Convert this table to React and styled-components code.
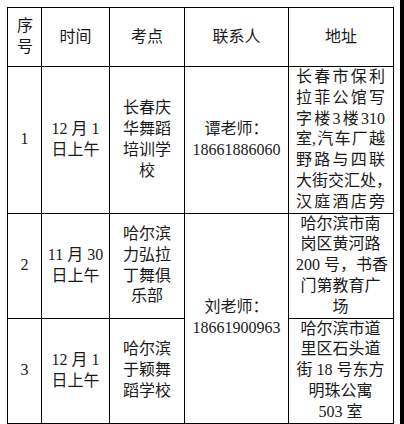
import React from "react";
import styled, { createGlobalStyle } from "styled-components";

const GlobalStyle = createGlobalStyle`
  html, body {
    margin: 0;
    padding: 0;
    background: #fff;
  }
  body {
    font-family: "Liberation Serif", "Noto Sans CJK SC", serif;
    color: #1a1a1a;
  }
`;

const Page = styled.div`
  display: flex;
  width: 404px;
  height: 424px;
  background: #fff;
  overflow: hidden;
`;

const Sheet = styled.div`
  width: 400px;
  padding: 7px 0 0 7px;
  box-sizing: border-box;
`;

const EdgeStrip = styled.div`
  width: 4px;
  height: 100%;
  background: #000;
`;

const Table = styled.table`
  width: 386px;
  table-layout: fixed;
  border-collapse: collapse;
  font-size: 16px;
  line-height: 20.8px;
`;

const Col = styled.col`
  width: ${(p) => p.$w}px;
`;

const Row = styled.tr`
  height: ${(p) => p.$h}px;
`;

const HeadCell = styled.th`
  border: 1px solid #000;
  font-weight: normal;
  text-align: center;
  vertical-align: middle;
  padding: 0 ${(p) => p.$pad || 7}px;
`;

const Cell = styled.td`
  border: 1px solid #000;
  text-align: center;
  vertical-align: middle;
  padding: 0 ${(p) => p.$pad || 7}px;
  white-space: nowrap;
`;

const AddrCell = styled.td`
  border: 1px solid #000;
  vertical-align: middle;
  padding: 0 8px 0 7px;
  white-space: nowrap;
`;

const Line = styled.div`
  text-align: center;
`;

const SpreadLine = styled.div`
  display: flex;
  justify-content: space-between;
`;

const tokenize = (s) => s.match(/[0-9]+|[^0-9\s][，,]?/g) || [];

const Lines = ({ lines }) =>
  lines.map((l, i) => <Line key={i}>{l}</Line>);

const Address = ({ lines, spread }) =>
  lines.map((l, i) =>
    spread ? (
      <SpreadLine key={i}>
        {tokenize(l).map((t, j) => (
          <span key={j}>{t}</span>
        ))}
      </SpreadLine>
    ) : (
      <Line key={i}>{l}</Line>
    )
  );

const rows = [
  {
    no: "1",
    height: 146,
    time: ["12 月 1", "日上午"],
    place: ["长春庆", "华舞蹈", "培训学", "校"],
    contact: ["谭老师：", "18661886060"],
    spread: true,
    address: [
      "长春市保利",
      "拉菲公馆写",
      "字楼 3 楼 310",
      "室,汽车厂越",
      "野路与四联",
      "大街交汇处，",
      "汉庭酒店旁",
    ],
  },
  {
    no: "2",
    height: 104,
    time: ["11 月 30", "日上午"],
    place: ["哈尔滨", "力弘拉", "丁舞俱", "乐部"],
    contact: ["刘老师：", "18661900963"],
    contactSpan: 2,
    address: ["哈尔滨市南", "岗区黄河路", "200 号，书香", "门第教育广", "场"],
  },
  {
    no: "3",
    height: 105,
    time: ["12 月 1", "日上午"],
    place: ["哈尔滨", "于颖舞", "蹈学校"],
    address: ["哈尔滨市道", "里区石头道", "街 18 号东方", "明珠公寓", "503 室"],
  },
];

export default function App() {
  return (
    <>
      <GlobalStyle />
      <Page>
        <Sheet>
          <Table>
            <colgroup>
              <Col $w={34} />
              <Col $w={68} />
              <Col $w={75} />
              <Col $w={104} />
              <Col $w={105} />
            </colgroup>
            <thead>
              <Row $h={59}>
                <HeadCell $pad={9}>序号</HeadCell>
                <HeadCell>时间</HeadCell>
                <HeadCell>考点</HeadCell>
                <HeadCell>联系人</HeadCell>
                <HeadCell>地址</HeadCell>
              </Row>
            </thead>
            <tbody>
              {rows.map((r) => (
                <Row key={r.no} $h={r.height}>
                  <Cell $pad={2}>{r.no}</Cell>
                  <Cell $pad={2}>
                    <Lines lines={r.time} />
                  </Cell>
                  <Cell $pad={2}>
                    <Lines lines={r.place} />
                  </Cell>
                  {r.contact && (
                    <Cell $pad={2} rowSpan={r.contactSpan || 1}>
                      <Lines lines={r.contact} />
                    </Cell>
                  )}
                  <AddrCell>
                    <Address lines={r.address} spread={r.spread} />
                  </AddrCell>
                </Row>
              ))}
            </tbody>
          </Table>
        </Sheet>
        <EdgeStrip />
      </Page>
    </>
  );
}
